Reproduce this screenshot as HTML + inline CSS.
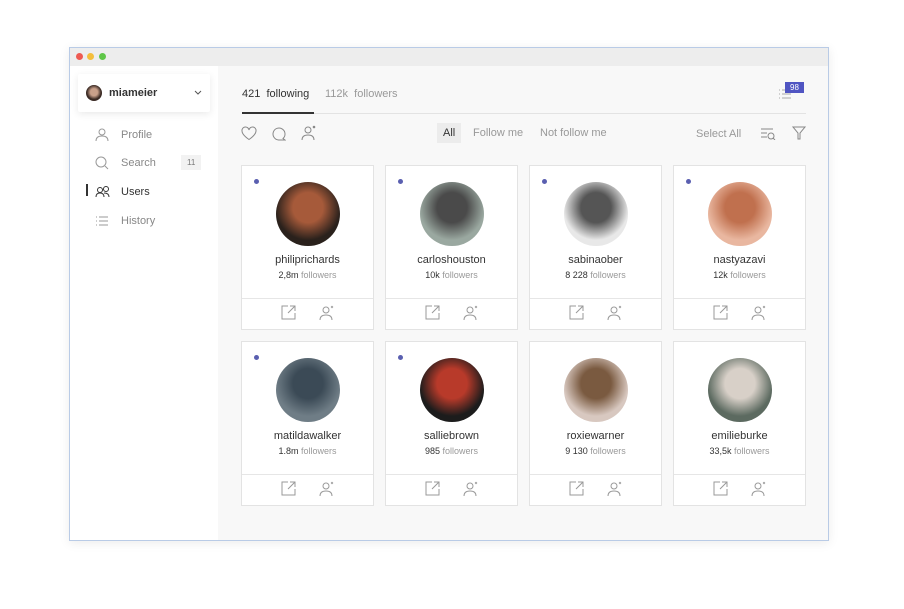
<!DOCTYPE html>
<html><head><meta charset="utf-8"><style>
*{margin:0;padding:0;box-sizing:border-box}
body{width:904px;height:609px;background:#fff;font-family:"Liberation Sans",sans-serif;position:relative;overflow:hidden}
.win{position:absolute;left:69px;top:47px;width:760px;height:494px;border:1px solid #b9cbe6;background:#f8f8f8;box-shadow:0 2px 10px rgba(0,0,0,.08)}
.tb{height:18px;background:#ededed;position:relative}
.tb i{position:absolute;top:5px;width:7px;height:7px;border-radius:50%}
.side{position:absolute;left:0;top:18px;width:148px;bottom:0;background:#fff}
.acct{position:absolute;left:8px;top:8px;width:132px;height:38px;background:#fff;box-shadow:0 2px 8px rgba(0,0,0,.09);border-radius:2px}
.acct .av{position:absolute;left:8px;top:11px;width:16px;height:16px;border-radius:50%;background:radial-gradient(circle at 50% 45%,#c9a08a 30%,#3a2a24 60%)}
.acct span{position:absolute;left:31px;top:13px;font-size:11px;color:#333;font-weight:bold}
.nav{position:absolute;left:25px;font-size:11px;color:#888}
.nav svg{position:absolute;left:0;top:-1px}
.nav span{position:absolute;left:26px;top:0;white-space:nowrap}
.main{position:absolute;left:148px;top:18px;right:0;bottom:0}
.t{position:absolute;font-size:11px;color:#999;white-space:nowrap}
.card{position:absolute;width:133px;height:165px;background:#fff;border:1px solid #e3e3e3}
.card .dot{position:absolute;left:12px;top:13px;width:5px;height:5px;border-radius:50%;background:#5a5fb0}
.card .ph{position:absolute;left:34px;top:16px;width:64px;height:64px;border-radius:50%}
.card .n{position:absolute;top:88px;width:100%;text-align:center;font-size:11px;color:#333}
.card .f{position:absolute;top:104px;width:100%;text-align:center;font-size:9px;color:#333}
.card .f b{font-weight:normal;color:#999}
.card .ft{position:absolute;left:0;right:0;top:132px;border-top:1px solid #e6e6e6;height:32px}
.card .ft svg{position:absolute;top:6px}
</style></head><body>
<div class="win">
<div class="tb"><i style="left:6px;background:#ee5a52"></i><i style="left:17px;background:#f4be3c"></i><i style="left:29px;background:#5fc648"></i></div>
<div class="side">
<div class="acct"><div class="av"></div><span>miameier</span>
<svg style="position:absolute;left:116px;top:16px" width="8" height="6"><path d="M1 1l3 3 3-3" stroke="#555" fill="none"/></svg></div>
<div class="nav" style="top:63px"><svg width="14" height="14" fill="none" stroke="#999"><circle cx="7" cy="4" r="3"/><path d="M1 13c0-4 3-5 6-5s6 1 6 5"/></svg><span>Profile</span></div>
<div class="nav" style="top:91px"><svg width="14" height="14" fill="none" stroke="#999"><circle cx="6" cy="6" r="5"/><path d="M10 10l3 3"/></svg><span>Search</span><span style="left:86px;top:-2px;background:#f2f2f2;font-size:8px;padding:3px 6px;color:#777">11</span></div>
<div style="position:absolute;left:16px;top:118px;width:2px;height:12px;background:#333"></div>
<div class="nav" style="top:120px;color:#333"><svg width="16" height="14" fill="none" stroke="#333"><circle cx="5" cy="5" r="2.5"/><circle cx="11" cy="4" r="2.5"/><path d="M1 12c0-3 2-4 4-4s4 1 4 4M9 8c3 0 5 1 5 4"/></svg><span>Users</span></div>
<div class="nav" style="top:149px"><svg width="14" height="14" stroke="#999"><path d="M1 3h1M4 3h9M1 7h1M4 7h9M1 11h1M4 11h9"/></svg><span>History</span></div>
</div>
<div class="main">
<div class="t" style="left:24px;top:22px;color:#333">421 &nbsp;following</div>
<div class="t" style="left:107px;top:22px">112k &nbsp;followers</div>
<div style="position:absolute;left:24px;top:47px;width:564px;height:1px;background:#e3e3e3"></div>
<div style="position:absolute;left:24px;top:46px;width:72px;height:2px;background:#333"></div>
<svg style="position:absolute;left:560px;top:22px" width="14" height="12" stroke="#aaa"><path d="M1 2h1M4 2h9M1 6h1M4 6h9M1 10h1M4 10h9"/></svg>
<div style="position:absolute;left:567px;top:16px;background:#5055c2;color:#fff;font-size:8px;padding:1px 5px">98</div>
<svg style="position:absolute;left:23px;top:60px" width="16" height="15" fill="none" stroke="#888"><path d="M8 13.5S1 9 1 5a3.5 3.5 0 0 1 7-1 3.5 3.5 0 0 1 7 1c0 4-7 8.5-7 8.5z"/></svg>
<svg style="position:absolute;left:53px;top:60px" width="15" height="15" fill="none" stroke="#888"><path d="M12 12.5A6 6 0 1 0 7.5 14H14z"/></svg>
<svg style="position:absolute;left:83px;top:59px" width="16" height="16" fill="none" stroke="#888"><circle cx="7" cy="5" r="3"/><path d="M1 15c0-4 3-5 6-5s6 1 6 5"/><circle cx="13" cy="2" r="0.8" fill="#888"/></svg>
<div style="position:absolute;left:219px;top:57px;width:24px;height:20px;background:#ececec"></div>
<div class="t" style="left:225px;top:61px;color:#333">All</div>
<div class="t" style="left:255px;top:61px">Follow me</div>
<div class="t" style="left:322px;top:61px">Not follow me</div>
<div class="t" style="left:478px;top:62px">Select All</div>
<svg style="position:absolute;left:542px;top:61px" width="16" height="13" fill="none" stroke="#888"><path d="M1 2h12M1 6h6M1 10h6"/><circle cx="11" cy="9" r="3"/><path d="M13 11l2 2"/></svg>
<svg style="position:absolute;left:574px;top:60px" width="14" height="14" fill="none" stroke="#888"><path d="M1 1h12L8 7v6H6V7z"/></svg>
</div>
</div>
<div id="cards"></div>
<script>
var d=[["philiprichards","2,8m","#2a211c","#a65a3a",1],["carloshouston","10k","#9aa8a0","#4a4a4a",1],["sabinaober","8 228","#e8e8e8","#555",1],["nastyazavi","12k","#e9b7a0","#c0704e",1],["matildawalker","1.8m","#6f7d86","#3b4a56",1],["salliebrown","985","#1c1c1c","#b83a2a",1],["roxiewarner","9 130","#d8c8c0","#7a5a40",0],["emilieburke","33,5k","#5c6a60","#d8d0c8",0]];
var h="";
d.forEach(function(c,i){var x=241+(i%4)*144,y=165+Math.floor(i/4)*176;
h+='<div class="card" style="left:'+x+'px;top:'+y+'px">'+(c[4]?'<div class="dot"></div>':'')+
'<div class="ph" style="background:radial-gradient(circle at 50% 40%,'+c[3]+' 0,'+c[3]+' 30%,'+c[2]+' 65%)"></div>'+
'<div class="n">'+c[0]+'</div><div class="f">'+c[1]+' <b>followers</b></div><div class="ft">'+
'<svg style="left:39px" width="15" height="15" fill="none" stroke="#999"><path d="M7 1H1v13h13V8M9 1h5v5M14 1L7 8"/></svg>'+
'<svg style="left:77px" width="16" height="16" fill="none" stroke="#999"><circle cx="7" cy="5" r="3"/><path d="M1 15c0-4 3-5 6-5s6 1 6 5"/><path d="M12 1l2 2M14 1l-2 2" stroke-width=".8"/></svg></div></div>';});
document.getElementById("cards").innerHTML=h;
</script>
</body></html>
